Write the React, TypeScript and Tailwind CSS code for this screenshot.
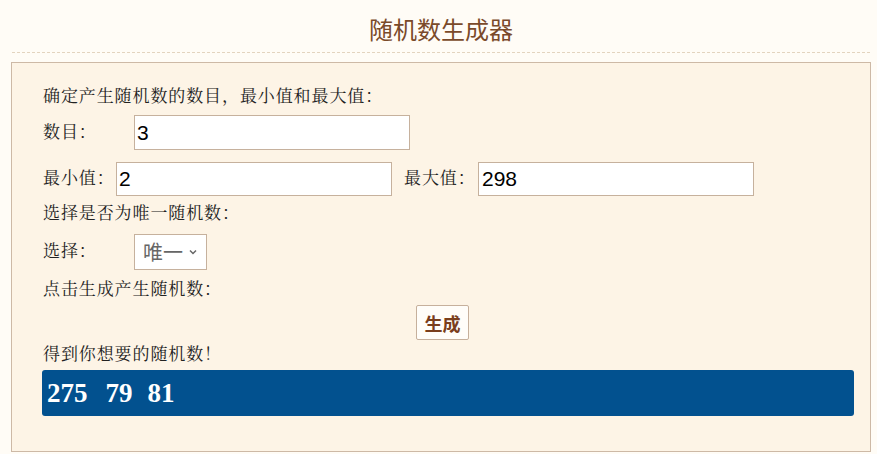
import React from "react";

export default function App() {
  const serif = { fontFamily: '"Liberation Serif", "Noto Serif CJK SC", "Noto Sans CJK SC", serif' } as React.CSSProperties;
  return (
    <div className="w-[877px] h-[454px] bg-[#fffcf6] overflow-hidden" style={serif}>
      <div className="ml-[12px] w-[858px] h-[53px] flex items-center justify-center border-b border-dashed border-[#e3d4bf] pt-[6px]">
        <h1 className="text-[24px] leading-[28px] text-[#7a4a2a] font-['Noto_Sans_CJK_SC',sans-serif]">随机数生成器</h1>
      </div>
      <div className="mt-[9px] ml-[11px] w-[860px] h-[390px] border border-[#cdb9a6] bg-[#fdf4e6] pl-[30px] pr-[16px] pt-[24px] text-[17px] leading-[20px] tracking-[0.9px] text-[#222]">
        <div className="pl-[1px]">确定产生随机数的数目，最小值和最大值：</div>
        <div className="mt-[8px] flex items-center pl-[1px]">
          <span className="w-[91px]">数目：</span>
          <div className="w-[276px] h-[35px] bg-white border border-[#c6b19d] flex items-center pl-[2px] text-[21px] tracking-normal text-black font-['Liberation_Sans',sans-serif]">3</div>
        </div>
        <div className="mt-[12px] flex items-center pl-[1px]">
          <span className="w-[73px]">最小值：</span>
          <div className="w-[276px] h-[34px] bg-white border border-[#c6b19d] flex items-center pl-[2px] text-[21px] tracking-normal text-black font-['Liberation_Sans',sans-serif]">2</div>
          <span className="ml-[12px] w-[74px]">最大值：</span>
          <div className="w-[276px] h-[34px] bg-white border border-[#c6b19d] flex items-center pl-[3px] text-[21px] tracking-normal text-black font-['Liberation_Sans',sans-serif]">298</div>
        </div>
        <div className="mt-[8px] pl-[1px]">选择是否为唯一随机数：</div>
        <div className="mt-[10px] flex items-center pl-[1px]">
          <span className="w-[91px]">选择：</span>
          <div className="w-[73px] h-[36px] bg-white border border-[#c6b19d] flex items-center pl-[8px] gap-[6px] text-[20px] tracking-normal text-[#666] font-['Noto_Sans_CJK_SC',sans-serif]">
            <span className="leading-[24px]">唯一</span>
            <svg width="8" height="6" viewBox="0 0 8 6"><path d="M1 1.5 L4 4.5 L7 1.5" fill="none" stroke="#666" strokeWidth="1.5" /></svg>
          </div>
        </div>
        <div className="mt-[10px] pl-[1px]">点击生成产生随机数：</div>
        <div className="mt-[5px] flex justify-center pr-[11px]">
          <div className="w-[53px] h-[35px] bg-[#fffdf9] border border-[#c6b09c] rounded-[2px] flex items-center justify-center text-[18px] tracking-normal font-bold text-[#7a3e1c] font-['Noto_Sans_CJK_SC',sans-serif]">生成</div>
        </div>
        <div className="mt-[5px] pl-[1px]">得到你想要的随机数！</div>
        <div className="mt-[5px] h-[46px] bg-[#02518f] rounded-[3px] flex items-center pl-[5px] text-white text-[27px] tracking-normal font-bold" style={{ fontFamily: '"Liberation Serif", serif' }}>
          <span>275</span>
          <span className="ml-[18px]">79</span>
          <span className="ml-[15px]">81</span>
        </div>
      </div>
    </div>
  );
}
